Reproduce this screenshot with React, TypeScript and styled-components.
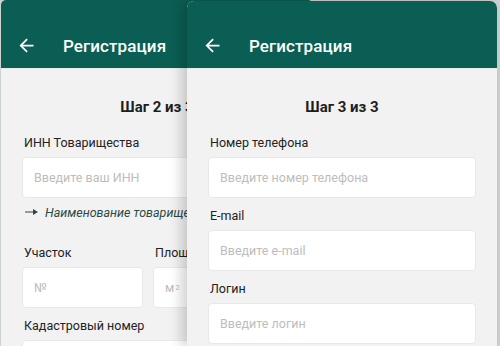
import React from 'react';
import styled, { createGlobalStyle } from 'styled-components';

const GlobalStyle = createGlobalStyle`
    html, body {
        margin: 0;
        padding: 0;
        background: #cdd3d1;
        font-family: Roboto, 'Noto Sans', Arial, sans-serif;
    }
`;

const Stage = styled.div`
    position: relative;
    width: 500px;
    height: 346px;
    overflow: hidden;
    padding-left: 1px;
    box-sizing: border-box;
`;

const Screen = styled.div`
    width: 312px;
    height: 346px;
    background: #f2f2f2;
    border-radius: 5px 5px 0 0;
    overflow: hidden;
    display: flex;
    flex-direction: column;
`;

// the second step sits over the first one, like a stacked card
const FrontScreen = styled(Screen)`
    position: absolute;
    left: 187px;
    top: 1px;
    width: 310px;
    border-radius: 7px 7px 0 0;
    box-shadow: -5px 0 14px rgba(0, 0, 0, 0.2);
`;

const Header = styled.div<{ tall?: boolean }>`
    height: ${props => (props.tall ? 69 : 68)}px;
    flex-shrink: 0;
    box-sizing: border-box;
    padding: ${props => (props.tall ? 23 : 22)}px 0 0 15px;
    background: #0b5e53;
    border-bottom: 1px solid #e9eeec;
    display: flex;
    align-items: center;
    color: #ffffff;
`;

const BackButton = styled.span`
    display: flex;
    width: 21px;
    height: 21px;
`;

const Title = styled.span`
    margin-left: 26px;
    font-size: 17px;
    font-weight: 500;
    letter-spacing: 0.1px;
`;

const Body = styled.div`
    padding: 0 21px;
    display: flex;
    flex-direction: column;
`;

const Step = styled.div`
    margin: 28px 0 17px;
    line-height: 20px;
    text-align: center;
    font-size: 15px;
    font-weight: 700;
    color: #1e1e1e;
`;

const Field = styled.div`
    display: flex;
    flex-direction: column;
    margin-bottom: 9px;
    min-width: 0;
`;

const Label = styled.div`
    padding-left: 2px;
    line-height: 18px;
    margin-bottom: 5px;
    font-size: 12.5px;
    color: #222222;
    white-space: nowrap;
`;

const Input = styled.div`
    height: 41px;
    box-sizing: border-box;
    padding: 0 11px;
    display: flex;
    align-items: center;
    background: #ffffff;
    border: 1px solid #e8e8e8;
    border-radius: 4px;
    font-size: 12.5px;
    color: #bdbdbd;
    white-space: nowrap;
    overflow: hidden;
`;

const Hint = styled.div`
    display: flex;
    align-items: center;
    height: 20px;
    margin: -5px 0 22px 3px;
    font-size: 12.5px;
    font-style: italic;
    color: #2c4a45;
    white-space: nowrap;

    svg {
        margin-right: 7px;
        flex-shrink: 0;
    }
`;

const Row = styled.div`
    display: grid;
    grid-template-columns: 121px 121px 121px;
    column-gap: 10px;
`;

const Sup = styled.sup`
    font-size: 8px;
    margin-left: 1px;
`;

const ArrowBack = () => (
    <BackButton>
        <svg width="21" height="21" viewBox="0 0 24 24" fill="#ffffff">
            <path d="M20 11H7.83l5.59-5.59L12 4l-8 8 8 8 1.41-1.41L7.83 13H20v-2z" />
        </svg>
    </BackButton>
);

const HintArrow = () => (
    <svg width="13" height="8" viewBox="0 0 13 8">
        <path d="M0 3.4h9v1.2H0z" fill="#2c4a45" />
        <path d="M8 0.9L13 4 8 7.1z" fill="#2c4a45" />
    </svg>
);

const App = () => (
    <>
        <GlobalStyle />
        <Stage>
            <Screen>
                <Header tall={true}>
                    <ArrowBack />
                    <Title>Регистрация</Title>
                </Header>
                <Body>
                    <Step>Шаг 2 из 3</Step>
                    <Field>
                        <Label>ИНН Товарищества</Label>
                        <Input>Введите ваш ИНН</Input>
                    </Field>
                    <Hint>
                        <HintArrow />
                        Наименование товарищества
                    </Hint>
                    <Row>
                        <Field>
                            <Label>Участок</Label>
                            <Input>№</Input>
                        </Field>
                        <Field>
                            <Label>Площадь</Label>
                            <Input>
                                м<Sup>2</Sup>
                            </Input>
                        </Field>
                    </Row>
                    <Field>
                        <Label>Кадастровый номер</Label>
                        <Input>Введите кадастровый номер</Input>
                    </Field>
                </Body>
            </Screen>

            <FrontScreen>
                <Header>
                    <ArrowBack />
                    <Title>Регистрация</Title>
                </Header>
                <Body>
                    <Step>Шаг 3 из 3</Step>
                    <Field>
                        <Label>Номер телефона</Label>
                        <Input>Введите номер телефона</Input>
                    </Field>
                    <Field>
                        <Label>E-mail</Label>
                        <Input>Введите e-mail</Input>
                    </Field>
                    <Field>
                        <Label>Логин</Label>
                        <Input>Введите логин</Input>
                    </Field>
                </Body>
            </FrontScreen>
        </Stage>
    </>
);

export default App;
